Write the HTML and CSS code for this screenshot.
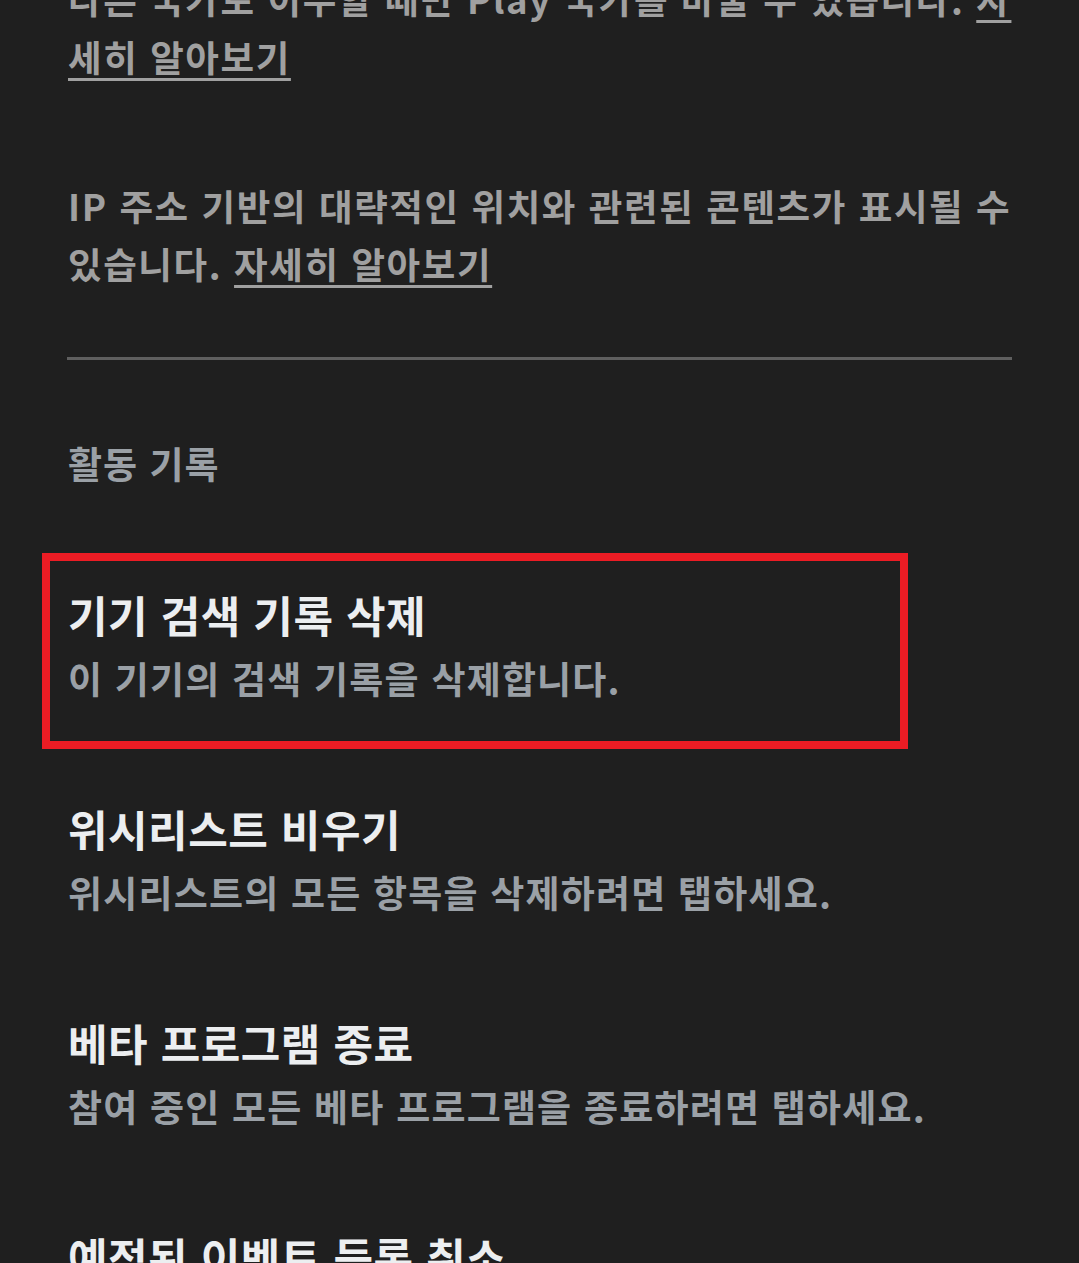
FILE: index.html
```html
<!DOCTYPE html>
<html lang="ko">
<head>
<meta charset="utf-8">
<title>설정</title>
<link rel="stylesheet" href="styles.css">
</head>
<body>
<main class="page">
  <p class="note note-first">다른 국가로 이주할 때만 Play 국가를 바꿀 수 있습니다. <a class="link" href="#">자<br>세히 알아보기</a></p>
  <p class="note">IP 주소 기반의 대략적인 위치와 관련된 콘텐츠가 표시될 수<br>있습니다. <a class="link" href="#">자세히 알아보기</a></p>
  <hr class="divider">
  <h2 class="section-title">활동 기록</h2>
  <ul class="items">
    <li class="item item-marked">
      <span class="mark"></span>
      <div class="item-title">기기 검색 기록 삭제</div>
      <div class="item-sub">이 기기의 검색 기록을 삭제합니다.</div>
    </li>
    <li class="item">
      <div class="item-title">위시리스트 비우기</div>
      <div class="item-sub">위시리스트의 모든 항목을 삭제하려면 탭하세요.</div>
    </li>
    <li class="item">
      <div class="item-title">베타 프로그램 종료</div>
      <div class="item-sub">참여 중인 모든 베타 프로그램을 종료하려면 탭하세요.</div>
    </li>
    <li class="item">
      <div class="item-title">예정된 이벤트 등록 취소</div>
      <div class="item-sub">예정된 모든 이벤트 등록을 취소하려면 탭하세요.</div>
    </li>
  </ul>
</main>
</body>
</html>
```

FILE: styles.css
```css
html, body {
  margin: 0;
  padding: 0;
  background: #1f1f1f;
  overflow: hidden;
}
body {
  font-family: "Noto Sans CJK KR", "Noto Sans", sans-serif;
  height: 1263px;
}
.page {
  padding: 0 68px;
}
.note {
  margin: 0 0 91px;
  font-size: 36.5px;
  line-height: 58px;
  font-weight: 700;
  color: #a0a0a0;
  letter-spacing: 1.6px;
  white-space: nowrap;
}
.note-first {
  margin-top: -30px;
}
.link {
  color: #a0a0a0;
  text-decoration: underline;
  text-decoration-thickness: 3px;
  text-underline-offset: 6px;
}
.note + .note {
  margin-bottom: 64px;
}
.divider {
  margin: 0 -1px;
  border: 0;
  height: 3px;
  background: #5f5f5f;
}
.section-title {
  margin: 74px 0 47px;
  font-size: 37px;
  line-height: 58px;
  font-weight: 700;
  color: #9aa0a6;
  letter-spacing: 1px;
}
.items {
  list-style: none;
  margin: 0;
  padding: 0;
}
.item {
  position: relative;
  padding: 43px 0;
}
.item-title {
  font-size: 43px;
  line-height: 64px;
  font-weight: 700;
  color: #eceef0;
  letter-spacing: 0.5px;
}
.item-sub {
  font-size: 37px;
  line-height: 64px;
  font-weight: 700;
  color: #9aa0a6;
  letter-spacing: 1.2px;
  white-space: nowrap;
}
.mark {
  position: absolute;
  left: -26px;
  top: 14px;
  width: 866px;
  height: 196px;
  box-sizing: border-box;
  border: 8px solid #ec1c24;
  pointer-events: none;
}
```
